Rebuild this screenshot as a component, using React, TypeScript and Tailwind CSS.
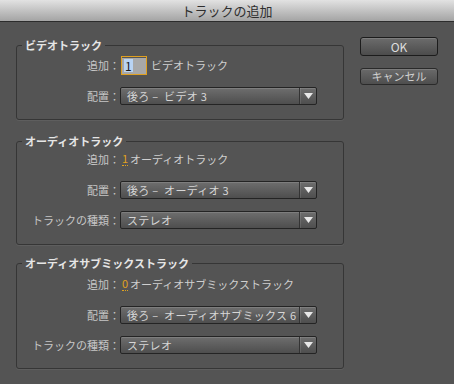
const FONT = { fontFamily: '"Noto Sans CJK JP", "Noto Sans", sans-serif' };

function Arrow() {
  return (
    <svg width="9" height="6" viewBox="0 0 9 6">
      <path d="M0 0 H9 L4.5 6 Z" fill="#e8e8e8" />
    </svg>
  );
}

function Select({ value }: { value: string }) {
  return (
    <div className="w-[197px] h-[18px] flex items-stretch rounded-[2px] border border-[#242424] bg-gradient-to-b from-[#6e6e6e] to-[#4e4e4e] shadow-[inset_0_1px_0_rgba(255,255,255,0.12)]">
      <div className="flex-1 pl-[6px] flex items-center text-[11px] text-[#d6d6d6] whitespace-pre overflow-hidden leading-none tracking-[0.3px]">
        {value}
      </div>
      <div className="w-[17px] flex items-center justify-center border-l border-l-[#333] shadow-[inset_1px_0_0_rgba(255,255,255,0.1)]">
        <Arrow />
      </div>
    </div>
  );
}

function Row({
  label,
  className,
  children,
}: {
  label: string;
  className?: string;
  children: React.ReactNode;
}) {
  return (
    <div className={`flex items-center ${className ?? ""}`}>
      <div className="w-[103px] text-right text-[11px] text-[#c6c6c6] leading-none whitespace-nowrap">
        {label}
      </div>
      {children}
    </div>
  );
}

function Count({ n, text }: { n: string; text: string }) {
  return (
    <div className="flex items-center text-[11px] leading-none ml-[2px]">
      <span className="text-[#e0a21e] border-b border-dotted border-b-[#e0a21e] pb-[1px]">{n}</span>
      <span className="ml-[2px] text-[#cfcfcf]">{text}</span>
    </div>
  );
}

function Group({
  title,
  className,
  children,
}: {
  title: string;
  className?: string;
  children: React.ReactNode;
}) {
  return (
    <fieldset
      className={`w-[328px] border border-[#363636] rounded-[3px] shadow-[0_1px_0_rgba(255,255,255,0.06)] ${className ?? ""}`}
    >
      <legend className="ml-[5px] px-[3px] text-[11px] leading-[16px] font-bold text-[#e6e6e6]">
        {title}
      </legend>
      {children}
    </fieldset>
  );
}

export default function App() {
  return (
    <div className="w-[454px] h-[384px] bg-[#545454] flex flex-col overflow-hidden" style={FONT}>
      <div className="h-[22px] shrink-0 flex items-center justify-center bg-gradient-to-b from-[#e2e2e2] to-[#a4a4a4] border-b border-b-[#2c2c2c] text-[13px] text-[#2e2e2e]">
        トラックの追加
      </div>
      <div className="flex">
        <div className="pl-[16px] w-[344px] flex flex-col">
          <Group title="ビデオトラック" className="mt-[15px] pb-[14px]">
            <Row label="追加：" className="mt-[3px] h-[19px]">
              <div className="ml-[1px] w-[26px] h-[19px] border border-[#e0a020] bg-[#a8a8a8] shadow-[inset_0_1px_0_#555] flex items-center pl-[2px]">
                <span className="bg-[#b9d4f4] text-[#1a1a1a] text-[12px] leading-[13px] px-[1px]">1</span>
              </div>
              <span className="ml-[4px] text-[11px] leading-none text-[#cfcfcf]">ビデオトラック</span>
            </Row>
            <Row label="配置：" className="mt-[12px] h-[18px]">
              <Select value="後ろ –  ビデオ 3" />
            </Row>
          </Group>

          <Group title="オーディオトラック" className="mt-[13px] pb-[15px]">
            <Row label="追加：" className="h-[20px]">
              <Count n="1" text="オーディオトラック" />
            </Row>
            <Row label="配置：" className="mt-[12px] h-[18px]">
              <Select value="後ろ –  オーディオ 3" />
            </Row>
            <Row label="トラックの種類：" className="mt-[12px] h-[18px]">
              <Select value="ステレオ" />
            </Row>
          </Group>

          <Group title="オーディオサブミックストラック" className="mt-[10px] pb-[14px]">
            <Row label="追加：" className="mt-[3px] h-[20px]">
              <Count n="0" text="オーディオサブミックストラック" />
            </Row>
            <Row label="配置：" className="mt-[12px] h-[18px]">
              <Select value="後ろ –  オーディオサブミックス 6" />
            </Row>
            <Row label="トラックの種類：" className="mt-[12px] h-[18px]">
              <Select value="ステレオ" />
            </Row>
          </Group>
        </div>

        <div className="ml-[16px] pt-[15px] flex flex-col">
          <button className="w-[78px] h-[19px] rounded-[3px] border border-[#1c1c1c] bg-gradient-to-b from-[#6c6c6c] to-[#4c4c4c] shadow-[inset_0_1px_0_rgba(255,255,255,0.12)] text-[12px] leading-none text-[#dedede]">
            OK
          </button>
          <button className="mt-[12px] w-[78px] h-[17px] rounded-[3px] border border-[#2a2a2a] bg-gradient-to-b from-[#6a6a6a] to-[#4e4e4e] shadow-[inset_0_1px_0_rgba(255,255,255,0.12)] text-[11px] leading-none text-[#d0d0d0]">
            キャンセル
          </button>
        </div>
      </div>
    </div>
  );
}
